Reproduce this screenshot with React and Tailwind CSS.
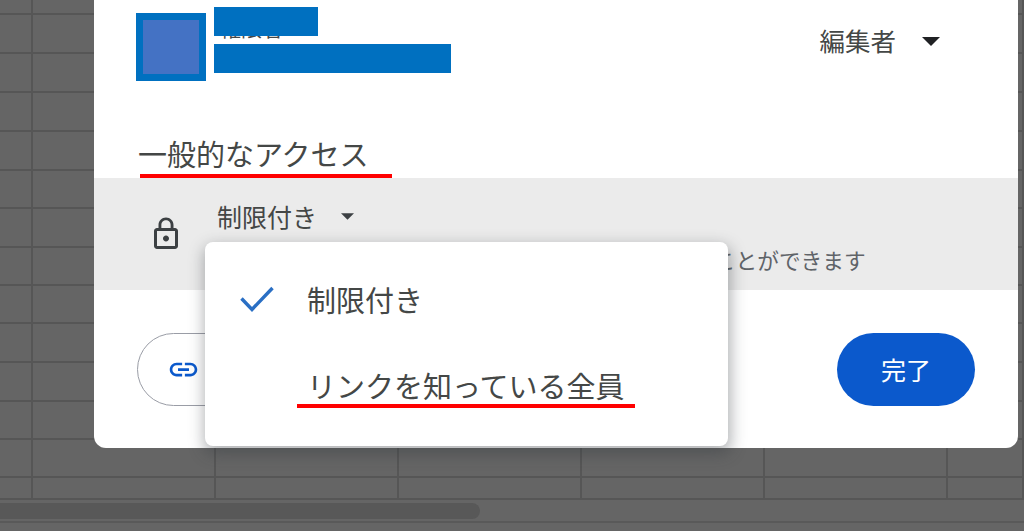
import { MdLink, MdLockOutline } from "react-icons/md";

const cells = Array.from({ length: 14 * 7 });

function Caret({ className }) {
  return (
    <svg viewBox="0 0 18 9" className={className} fill="currentColor">
      <path d="M0 0h18L9 9z" />
    </svg>
  );
}

function SheetGrid() {
  return (
    <div className="w-full">
      <div className="grid grid-cols-[33px_183px_183px_183px_183px_183px_76px] grid-rows-[15px_39px_39px_39px_39px_38px_39px_38px_38px_39px_39px_38px_38px_22px]">
        {cells.map((_, i) => (
          <div key={i} className="border-r-2 border-b-2 border-[#565656]" />
        ))}
      </div>
      <div className="h-[23px] pt-[3px] border-b-2 border-[#595959]">
        <div className="w-[480px] h-[16px] rounded-r-lg bg-[#585858]" />
      </div>
    </div>
  );
}

function MenuItem({ checked, children }) {
  return (
    <div className="h-[86px] flex items-center">
      <div className="w-[102px] pl-[35px]">
        {checked && (
          <svg viewBox="0 0 34 26" className="w-[34px] h-[26px]" fill="none" stroke="#2a6fc4" strokeWidth="3.4">
            <path d="M1.5 12.5 12 23.5 32.5 2" />
          </svg>
        )}
      </div>
      <span className="text-[29px] leading-none text-[#444746]">{children}</span>
    </div>
  );
}

export default function App() {
  return (
    <div className="relative w-[1024px] h-[531px] overflow-hidden bg-[#656565] font-['Noto_Sans_CJK_JP',sans-serif]">
      <SheetGrid />

      <div className="absolute left-[94px] top-0 w-[924px] h-[448px] bg-white rounded-b-xl">
        {/* people row */}
        <div className="flex items-start pt-[7px] pl-[42px] pr-[78px] h-[135px]">
          <div className="mt-[6px] w-[70px] h-[68px] bg-[#0070c0] flex items-center justify-center">
            <div className="w-[56px] h-[54px] bg-[#4472c4]" />
          </div>
          <div className="ml-[8px] w-[237px]">
            <div className="relative h-[31px] w-[104px]">
              <span className="absolute left-[6px] bottom-0 text-[21px] leading-none text-[#444746]">権限者</span>
              <div className="absolute inset-x-0 top-0 h-[29px] bg-[#0070c0]" />
            </div>
            <div className="mt-[6px] h-[29px] bg-[#0070c0]" />
          </div>
          <div className="ml-auto mt-[18px] flex items-center text-[#444746]">
            <span className="text-[25.5px] leading-[30px]">編集者</span>
            <Caret className="ml-[26px] mt-[3px] w-[18px] h-[9px] text-[#202124]" />
          </div>
        </div>

        {/* general access */}
        <div className="relative h-[43px] pl-[44px] pt-[1px]">
          <h2 className="text-[29px] leading-[34px] text-[#444746]">一般的なアクセス</h2>
          <div className="absolute left-[46px] top-[39px] w-[252px] h-[4px] bg-[#ff0000]" />
        </div>
        <div className="h-[112px] bg-[#ebebeb] flex">
          <MdLockOutline className="mt-[38px] ml-[54px] text-[#3c4043] shrink-0" size={36} />
          <div className="ml-[33px] pt-[21px]">
            <div className="flex items-center text-[#444746]">
              <span className="text-[25px] leading-[34px]">制限付き</span>
              <Caret className="ml-[24px] mt-[1px] w-[13px] h-[7px] text-[#3c4043]" />
            </div>
            <p className="mt-[12px] text-[21.7px] leading-[30px] whitespace-nowrap text-[#5f6368]">
              アクセス権のあるユーザーのみが、リンクから開くことができます
            </p>
          </div>
        </div>

        {/* footer */}
        <div className="flex items-center justify-between pt-[43px] pl-[43px] pr-[43px]">
          <button className="w-[320px] h-[73px] rounded-full border border-[#9a9da6] flex items-center pl-[29px] text-[#0b59cc]">
            <MdLink size={33} />
          </button>
          <button className="w-[138px] h-[73px] rounded-full bg-[#0b59cc] text-white text-[25px]">完了</button>
        </div>

        {/* dropdown */}
        <div className="absolute left-[111px] top-[242px] w-[523px] h-[204px] pt-[14px] bg-white rounded-lg shadow-[1px_6px_15px_2px_rgba(50,54,60,0.38)]">
          <MenuItem checked>制限付き</MenuItem>
          <MenuItem>リンクを知っている全員</MenuItem>
          <div className="absolute left-[92px] top-[162px] w-[338px] h-[4px] bg-[#ff0000]" />
        </div>
      </div>
    </div>
  );
}
